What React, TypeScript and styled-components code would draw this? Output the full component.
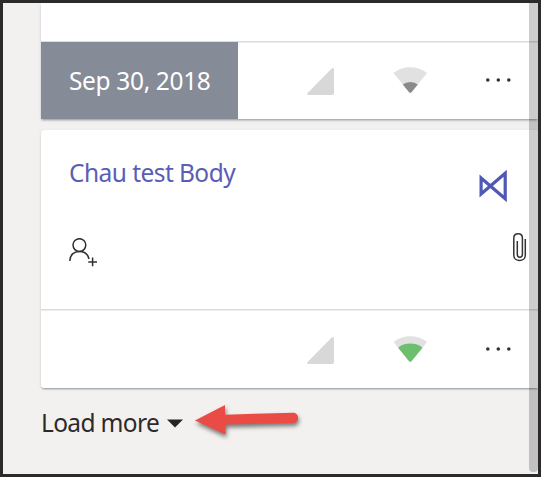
import React from "react";
import styled, { createGlobalStyle } from "styled-components";

const GlobalStyle = createGlobalStyle`
  * { box-sizing: border-box; }
  body { margin: 0; }
`;

const Frame = styled.main`
  position: relative;
  width: 541px;
  height: 477px;
  border: 3px solid #2b2b2b;
  padding-left: 38px;
  background: #f3f1f0;
  overflow: hidden;
  font-family: "Noto Sans", "Open Sans", sans-serif;
  font-size: 24.5px;
  line-height: 34px;
`;

const Card = styled.section<{ $height: number; $continued?: boolean }>`
  display: flex;
  flex-direction: column;
  height: ${(p) => p.$height}px;
  margin-top: ${(p) => (p.$continued ? 0 : 11)}px;
  background: #fff;
  border-radius: ${(p) => (p.$continued ? "0" : "4px 0 0 3px")};
  box-shadow: 0 2px 2px -1px rgba(55, 65, 92, 0.45), 0 1px 3px rgba(55, 65, 92, 0.15);
`;

const CardBody = styled.div`
  flex: 1;
  display: flex;
  justify-content: space-between;
  padding: 26px 11px 0 28px;
`;

const BodyColumn = styled.div<{ $end?: boolean }>`
  display: flex;
  flex-direction: column;
  align-items: ${(p) => (p.$end ? "flex-end" : "flex-start")};
`;

const Label = styled.span<{ $color: string; $spacing: number }>`
  color: ${(p) => p.$color};
  letter-spacing: ${(p) => p.$spacing}px;
  white-space: nowrap;
`;

const AssignIcon = styled.svg`
  margin-top: 48px;
`;
const FlowIcon = styled.svg`
  margin: 13px 18px 0 0;
`;
const ClipIcon = styled.svg`
  margin-top: 30px;
`;

const Footer = styled.div<{ $dated?: boolean }>`
  display: grid;
  grid-template-columns: 197px 1fr;
  height: ${(p) => (p.$dated ? 78 : 79)}px;
  flex: none;
`;

const DateCell = styled.div<{ $filled?: boolean }>`
  display: flex;
  align-items: center;
  padding: 1px 0 0 28px;
  background: ${(p) => (p.$filled ? "#858b97" : "transparent")};
  background-clip: padding-box;
  border-top: 1px solid ${(p) => (p.$filled ? "#d9dce0" : "#dcdcdd")};
  box-shadow: ${(p) => (p.$filled ? "none" : "inset 0 1px #ededee")};
`;

const Status = styled.div<{ $lowered?: boolean }>`
  display: flex;
  align-items: flex-start;
  padding: ${(p) => (p.$lowered ? 26 : 25)}px 0 0 69px;
  border-top: 1px solid #dcdcdd;
  box-shadow: inset 0 1px #ededee;
`;

const SignalIcon = styled.svg`
  margin-top: 1px;
`;
const WifiIcon = styled.svg`
  margin-left: 58px;
`;
const MoreIcon = styled.svg`
  margin-left: 57px;
`;

const LoadMore = styled.div`
  display: flex;
  align-items: center;
  margin-top: 18px;
  height: 34px;
`;

const Caret = styled.svg`
  margin-left: 8px;
`;

const Arrow = styled.svg`
  position: absolute;
  left: 187px;
  top: 397px;
  filter: drop-shadow(1px 3px 2px rgba(0, 0, 0, 0.5));
`;

const ScrollThumb = styled.div`
  position: absolute;
  right: 0;
  top: 0;
  width: 9px;
  height: 469px;
  border-radius: 0 0 4px 4px;
  background: rgba(0, 0, 0, 0.2);
`;

function StatusIcons({ strong }: { strong?: boolean }) {
  return (
    <Status $lowered={strong}>
      <SignalIcon width="28" height="28" viewBox="0 0 28 28">
        <path d="M24.7 .6Q27 -.9 27 1.8V25.2Q27 27 25.2 27H1.5Q-.9 27 .6 24.9Z" fill="#d8d8d8" />
      </SignalIcon>
      <WifiIcon width="35" height="27" viewBox="-.5 0 35 27">
        <path d="M0 6Q7.2 .2 16.8 .2T33.6 6L18.2 25.1Q16.8 26.7 15.4 25.1Z" fill="#e1e1e1" />
        {strong ? (
          <path d="M4.6 11.8Q9.6 7.6 16.8 7.6T29 11.8L18.2 25.1Q16.8 26.7 15.4 25.1Z" fill="#6cbf6e" />
        ) : (
          <path d="M9.3 17.6Q12.2 15 16.8 15T24.3 17.6L18.2 25.1Q16.8 26.7 15.4 25.1Z" fill="#8a8a8a" />
        )}
      </WifiIcon>
      <MoreIcon width="28" height="26" viewBox="0 0 28 26" fill="#333">
        <circle cx="2.8" cy="13" r="1.8" />
        <circle cx="13.3" cy="13" r="1.8" />
        <circle cx="23.8" cy="13" r="1.8" />
      </MoreIcon>
    </Status>
  );
}

export default function App() {
  return (
    <>
      <GlobalStyle />
      <Frame>
        <Card $height={116} $continued>
          <CardBody />
          <Footer $dated>
            <DateCell $filled>
              <Label $color="#fff" $spacing={-0.35}>Sep 30, 2018</Label>
            </DateCell>
            <StatusIcons />
          </Footer>
        </Card>
        <Card $height={258}>
          <CardBody>
            <BodyColumn>
              <Label $color="#5a5eb5" $spacing={-0.55}>Chau test Body</Label>
              <AssignIcon width="30" height="30" viewBox="0 0 30 30" fill="none" stroke="#2f2f2f" strokeWidth="1.5">
                <circle cx="10.4" cy="7.1" r="6.4" />
                <path d="M.8 23C.8 16.9 5 13.4 10.4 13.4C15.3 13.4 19 16.4 20 21M19.3 23.9H28M23.6 19.5V28.2" />
              </AssignIcon>
            </BodyColumn>
            <BodyColumn $end>
              <FlowIcon width="30" height="34" viewBox="0 0 30 34" fill="none" stroke="#4f58b4" strokeWidth="3.2">
                <path d="M2.1 9V25L26.2 4.3V29.7Z" />
              </FlowIcon>
              <ClipIcon width="14" height="30" viewBox="0 0 14 30" fill="none" stroke="#333" strokeWidth="1.5">
                <path d="M12.3 6V22.3C12.3 29.3 .8 29.3 .8 22.3V5.2C.8 -.6 9.4 -.6 9.4 5.2V21.3C9.4 25.2 4.3 25.2 4.3 21.3V8" />
              </ClipIcon>
            </BodyColumn>
          </CardBody>
          <Footer>
            <DateCell />
            <StatusIcons strong />
          </Footer>
        </Card>
        <LoadMore>
          <Label $color="#2c2b2a" $spacing={-0.65}>Load more</Label>
          <Caret width="16" height="9" viewBox="0 0 16 9">
            <path d="M0 .5H16L8 8.5Z" fill="#252423" />
          </Caret>
        </LoadMore>
        <Arrow width="112" height="40" viewBox="187 397 112 40">
          <path d="M192 417.5L222 402V411.7L290 409.7C296.5 409.5 297 419.8 290 420L222.5 421.5V431.5Z" fill="#eb4b45" />
        </Arrow>
        <ScrollThumb />
      </Frame>
    </>
  );
}
